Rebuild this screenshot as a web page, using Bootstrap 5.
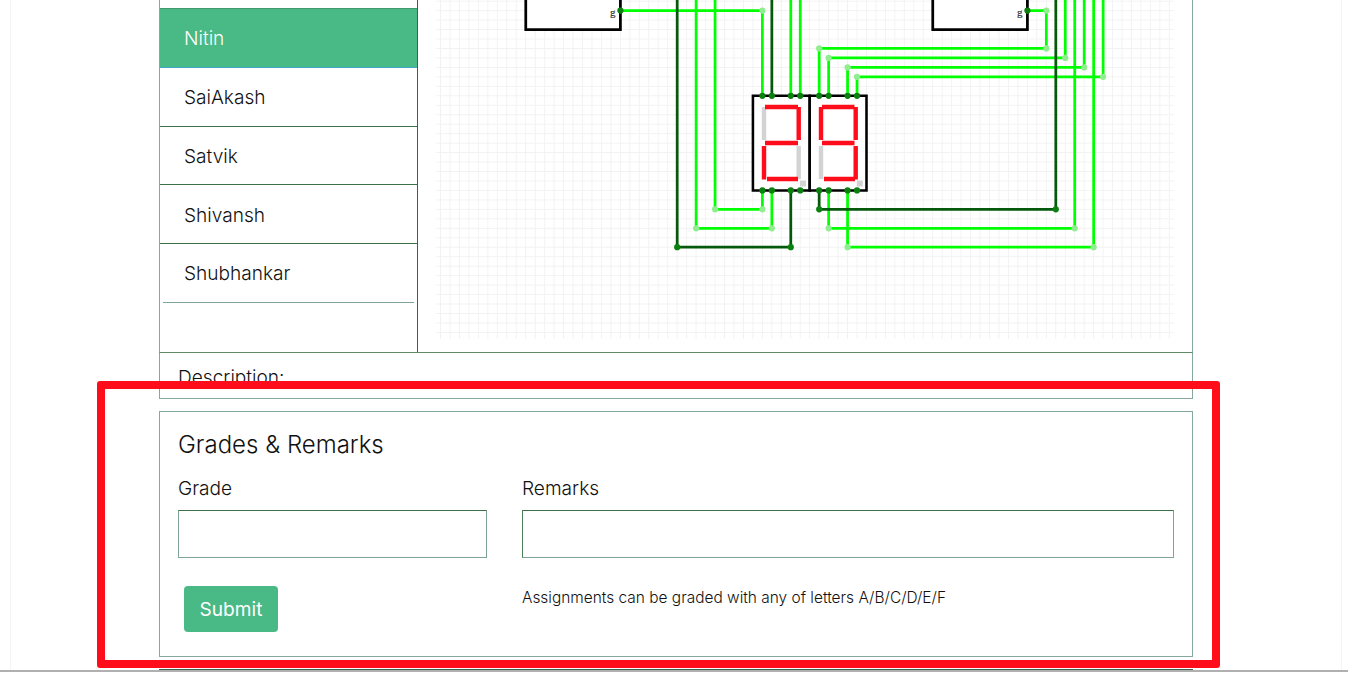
<!DOCTYPE html>
<html lang="en">
<head>
<meta charset="utf-8">
<meta name="viewport" content="width=device-width, initial-scale=1">
<title>Assignment</title>
<link href="https://cdn.jsdelivr.net/npm/bootstrap@5.3.0/dist/css/bootstrap.min.css" rel="stylesheet">
<style>
body{font-family:Inter,"Liberation Sans",sans-serif;font-weight:300;font-size:19.1px;line-height:28px;color:#111;background:#fff;height:674px;overflow:hidden}
.page-frame{height:672px;margin:0;border-bottom:2px solid #b0b0b0;overflow:hidden;padding:0 6px 0 10px}
.page-body{height:670px;border:solid #f4f4f4;border-width:0 1px;padding:0 148px}
.line{border:1px solid #86a89c}
.work{border-top:0;border-bottom-color:#5f8a66;height:353px}
.members{width:258px;border-right:1px solid #32683e;flex:none}
.members .list-group-item{height:58.75px;padding:1px 24px 0;border:0;border-bottom:1px solid #3d7048;color:#111;background:#fff;display:flex;align-items:center;border-radius:0}
.members .list-group-item.first{height:9px;border-color:#429670}
.members .list-group-item.active{background:#49b985;color:#fff;border-bottom-color:#42a8c8;margin-top:0}
.members .list-group-item.last{margin:0 3px;padding:1px 21px 0;border-color:#7fa396}
.circuit{display:block;margin-left:18px}
.desc{border-top:0;height:46px;padding:10px 18px}
.grading{height:246px;margin-top:12px;padding:18px 18px 0}
.grading h2{font-size:24px;line-height:30px;font-weight:300;margin:0 0 14px}
.col-grade{width:308.5px}
.col-remarks{margin-left:35.5px}
.entry{border:1px solid #7fa396;border-top-color:#3d7048;border-radius:0;height:48px;padding:0 12px;margin-top:8px}
.entry.green-left{border-left-color:#4d8058}
.btn-submit{background:#49b985;color:#fff;font-size:19.1px;font-weight:400;line-height:28px;border:0;border-radius:4px;width:94px;height:46px;padding:0;margin:28px 0 0 6px}
.hint{font-size:15.45px;line-height:22px;margin-top:29px}
.next-card{height:20px;margin-top:12px;border-color:#3d6048}
.callout{left:96.5px;top:381px;width:1123px;height:287px;border:8px solid #ff0d1b;border-radius:3px;pointer-events:none}
</style>
</head>
<body>
<main class="page-frame">
<div class="page-body">
  <section class="line work d-flex">
    <div class="list-group members rounded-0">
      <div class="list-group-item first"></div>
      <a class="list-group-item active">Nitin</a>
      <a class="list-group-item">SaiAkash</a>
      <a class="list-group-item">Satvik</a>
      <a class="list-group-item">Shivansh</a>
      <a class="list-group-item last">Shubhankar</a>
    </div>
    <svg class="circuit" width="738" height="339" viewBox="436 0 738 339">
      <defs>
        <pattern id="grid" x="440.05" y="10.15" width="9.465" height="9.465" patternUnits="userSpaceOnUse"><path d="M0 .5H9.465M.5 0V9.465" stroke="#f2f2f2" fill="none"/></pattern>
        <g id="digit-frame"><path d="M0 0H6V10H0Z" fill="#fff" stroke="#000" stroke-width=".27"/></g>
      </defs>
      <rect x="436" width="738" height="339" fill="url(#grid)"/>
      <g transform="translate(677.2 10.6) scale(9.465)" fill="none" stroke-width=".29">
        <g fill="#fff" stroke="#000"><path d="M-16-3H-6V2H-16ZM27-3H37V2H27Z"/></g>
        <use href="#digit-frame" x="8" y="9"/><use href="#digit-frame" x="14" y="9"/>
        <g stroke="#0f0">
          <path d="M-6 0H9V9M2-2V23H10V19M4-2V21H9V19M12-2V9M13-2V9"/>
          <path d="M37 0H39V4H15V9M41-2V5H16V9M43-2V6H18V9M45-2V7H19V9M42-2V23H16V19M44-2V25H18V19"/>
        </g>
        <path stroke="#045a0a" d="M0-2V25H12V19M10-2V9M40-2V21H15V19"/>
        <path stroke="#90ee90" stroke-width=".66" stroke-linecap="round" d="M9 0h0M10 23h0M9 21h0M39 0h0M39 4h0M15 4h0M41 5h0M16 5h0M43 6h0M18 6h0M45 7h0M19 7h0M42 23h0M16 23h0M44 25h0M18 25h0M2 23h0M4 21h0"/>
        <path stroke="#0a800f" stroke-width=".66" stroke-linecap="round" d="M-6 0h0M37 0h0M0 25h0M12 25h0M40 21h0M15 21h0M9 9h0M10 9h0M12 9h0M13 9h0M15 9h0M16 9h0M18 9h0M19 9h0M9 19h0M10 19h0M12 19h0M13 19h0M15 19h0M16 19h0M18 19h0M19 19h0"/>
      </g>
      <g fill="none" stroke="#ff0d1b" stroke-width="4.4">
        <path stroke="#d3d3d3" d="M764 107V140M798.7 146V179M821 146V179"/>
        <path d="M798.7 107V140M764 146V179.5M765 107H798M765 143H798M767 179H798"/>
        <path d="M821 107V140M855.7 107V140M855.7 146V179.5M822 107H854.5M822 143H854.5M824 179H855"/>
      </g>
      <path fill="#d3d3d3" d="M800 180.500h6v6h-6zM856.800 180.500h6v6h-6z"/>
      <g font-family="Liberation Serif, serif" font-size="11" font-weight="400" fill="#333" stroke="#333" stroke-width=".2"><text x="610" y="15.500">g</text><text x="1017" y="15.500">g</text></g>
    </svg>
  </section>
  <section class="line desc">Description:</section>
  <section class="line grading">
    <h2>Grades &amp; Remarks</h2>
    <form class="d-flex">
      <div class="col-grade flex-shrink-0">
        <label class="d-block" for="grade">Grade</label>
        <input id="grade" class="form-control entry">
        <button class="btn btn-submit" type="button">Submit</button>
      </div>
      <div class="col-remarks flex-grow-1">
        <label class="d-block" for="remarks">Remarks</label>
        <input id="remarks" class="form-control entry green-left">
        <div class="hint">Assignments can be graded with any of letters A/B/C/D/E/F</div>
      </div>
    </form>
  </section>
  <section class="line next-card"></section>
</div>
</main>
<div class="callout position-absolute"></div>
<script src="https://cdn.jsdelivr.net/npm/bootstrap@5.3.0/dist/js/bootstrap.bundle.min.js"></script>
</body>
</html>
